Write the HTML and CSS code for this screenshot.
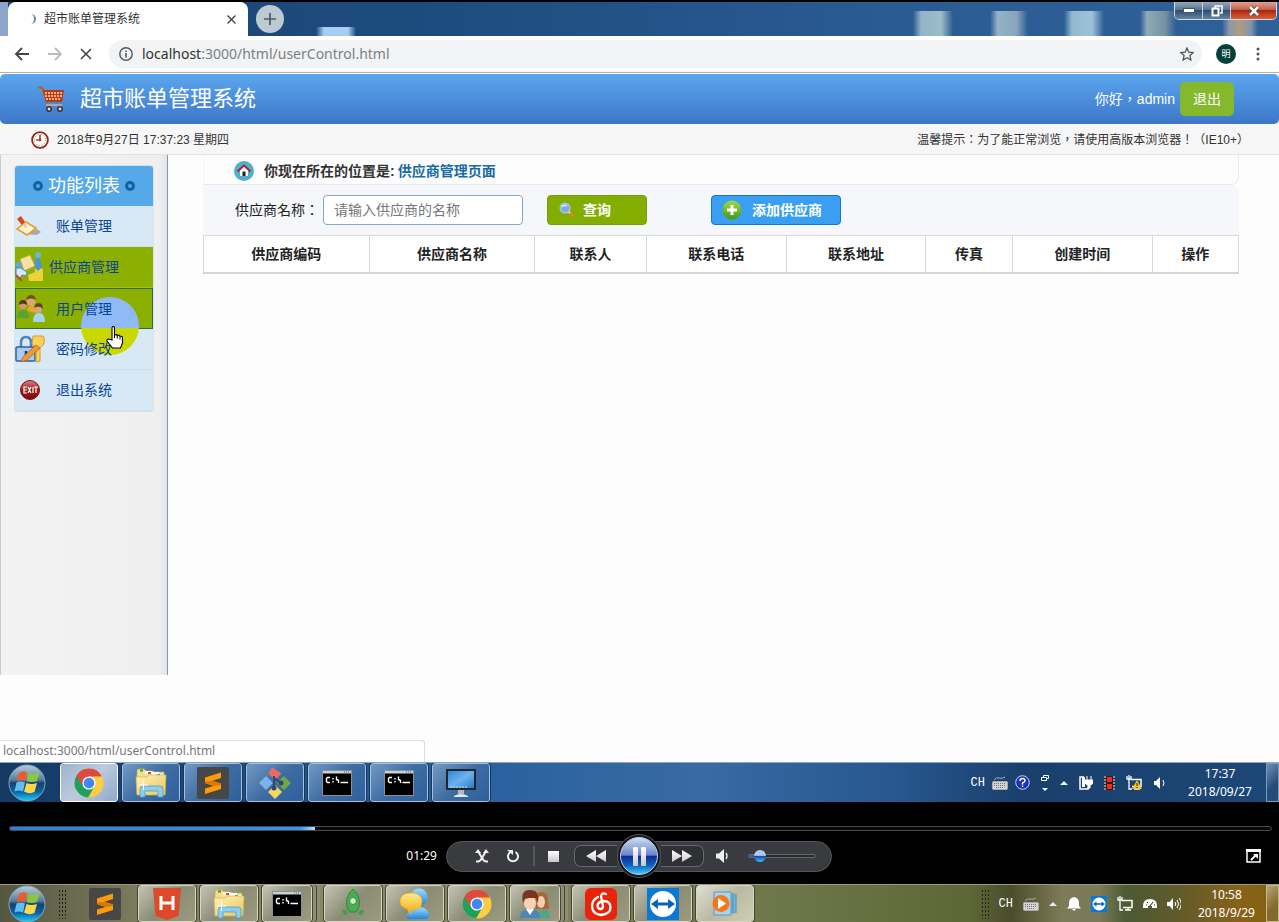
FILE: index.html
```html
<!DOCTYPE html>
<html lang="zh-CN">
<head>
<meta charset="utf-8">
<meta name="viewport" content="width=device-width, initial-scale=1">
<title>超市账单管理系统</title>
<link rel="stylesheet" href="styles.css">
</head>
<body>
<svg class="defs" aria-hidden="true">
  <defs>
    <linearGradient id="gOrb" x2="0" y2="1"><stop offset="0" stop-color="#b9cddb"/><stop offset=".42" stop-color="#587c99"/><stop offset=".5" stop-color="#10446f"/><stop offset=".75" stop-color="#0d63a4"/><stop offset="1" stop-color="#19d2ff"/></linearGradient>
    <linearGradient id="gPause" x2="0" y2="1"><stop offset="0" stop-color="#d2dcf3"/><stop offset=".48" stop-color="#6685c8"/><stop offset=".5" stop-color="#0b2c94"/><stop offset=".75" stop-color="#0f62bd"/><stop offset="1" stop-color="#3ed0ff"/></linearGradient>
    <linearGradient id="gWhite" x2="0" y2="1"><stop offset="0" stop-color="#fff"/><stop offset="1" stop-color="#c8c8c8"/></linearGradient>
    <linearGradient id="gFolder" x2="1" y2="1"><stop offset="0" stop-color="#fff3b8"/><stop offset="1" stop-color="#e9c75c"/></linearGradient>
    <linearGradient id="gRed" x2="0" y2="1"><stop offset="0" stop-color="#d08a8a"/><stop offset=".5" stop-color="#a01818"/><stop offset="1" stop-color="#7a0c0c"/></linearGradient>
    <linearGradient id="gGreen" x2="0" y2="1"><stop offset="0" stop-color="#a3d94a"/><stop offset="1" stop-color="#3f9a12"/></linearGradient>
    <linearGradient id="gScreen" x2="1" y2="1"><stop offset="0" stop-color="#2f86d8"/><stop offset=".5" stop-color="#6bb2ee"/><stop offset="1" stop-color="#2f7ac6"/></linearGradient>
    <linearGradient id="gBlue" x2="0" y2="1"><stop offset="0" stop-color="#9fdcff"/><stop offset="1" stop-color="#1f86de"/></linearGradient>
    <linearGradient id="gYellow" x2="0" y2="1"><stop offset="0" stop-color="#ffe98a"/><stop offset="1" stop-color="#f7a90a"/></linearGradient>
  </defs>
  <symbol id="orb" viewBox="0 0 38 38">
    <circle cx="19" cy="19" r="18" fill="url(#gOrb)" stroke="#86a6bd"/>
    <path d="M11 9q4-3 8-1l-2 9q-4-2-8.500 0z" fill="#ee5a2b"/>
    <path d="M20.500 9q5 2 11-1l-2.500 9q-5 2-10.500 0z" fill="#8cc63e"/>
    <path d="M8.500 18.500q4-2 8.500 0l-2 9q-4-2-8.500 0z" fill="#62bdf2"/>
    <path d="M18.500 19q5 2 10.500 0l-2.500 9q-5 2.500-10.500-.5z" fill="#ffd84a"/>
  </symbol>
  <symbol id="chrome" viewBox="0 0 30 30">
    <circle cx="15" cy="15" r="14.500" fill="#ffcd40"/>
    <path d="M15 15L2.400 7.800A14.500 14.500 0 0 0 14 29.500l6.500-11z" fill="#1fa05c"/>
    <path d="M15 15l-7.500 1-5.100-8.200A14.500 14.500 0 0 1 27.900 8.500H15z" fill="#dd4b3e"/>
    <circle cx="15" cy="15" r="6.600" fill="#fff"/><circle cx="15" cy="15" r="5.300" fill="#4285f4"/>
  </symbol>
  <symbol id="explorer" viewBox="0 0 32 30">
    <path d="M2 7V3q0-2 2-2h5l2 2h7l1 1h10v4h1v18H2z" fill="#f5df8c" stroke="#c9a94c" stroke-width=".7"/>
    <path d="M10 3h7v3h-7zM17 4h7v3h-7zM24 6h5v2h-5z" fill="#fff"/><path d="M5 1.500h3v2H5z" fill="#1aab1a"/><path d="M13 4h3v2h-3z" fill="#e8401c"/><path d="M22 6h3v2h-3z" fill="#2492e6"/>
    <path d="M1 9h11l2-2h17l-1 20H2z" fill="url(#gFolder)" stroke="#d3b150" stroke-width=".7"/>
    <path d="M5 29v-8q0-3 3-3h17q3 0 3 3v8h-5v-6H10v6z" fill="#8fcdec" stroke="#4a9fc8" stroke-width=".8"/>
    <path d="M8.500 12v10M4 17h9" stroke="#fff" stroke-width="1"/>
  </symbol>
  <symbol id="sublime" viewBox="0 0 32 32">
    <rect width="32" height="32" rx="2" fill="#474747"/>
    <path d="M8 10.500l16-5v5.500l-8.500 2.700L24 16.500V22L8 27v-5.500l8.500-2.600L8 16z" fill="#ff9a0b"/><path d="M15.500 13.700L24 16.500V18l-7.500.9L8 16v-1.500z" fill="#d87900"/>
  </symbol>
  <symbol id="git" viewBox="0 0 32 32">
    <path d="M9.500 6.500L13 0l9.500 6.500L16 13z" fill="#ee6a5f"/><path d="M0 16l7-7 7 7-7 7z" fill="#7fb0f0"/><path d="M18 16l7-7 7 7-7 7z" fill="#70a844"/><path d="M9 25l7-7 7 7-7 7z" fill="#f8d65a"/>
    <path d="M15 9v11M15 11l7 5" stroke="#2d4a6c" stroke-width="2"/><circle cx="15" cy="21" r="2.500" fill="#2d4a6c"/><circle cx="22" cy="16" r="2.500" fill="#2d4a6c"/>
  </symbol>
  <symbol id="cmd" viewBox="0 0 30 26">
    <rect x=".5" y=".5" width="29" height="25" fill="#000" stroke="#8a8f96"/><rect x="1" y="1" width="28" height="2.500" fill="#c9d0d8"/><path d="M22 2h6" stroke="#51627a" stroke-dasharray="1 1"/>
    <path d="M8 7.500H5.500L4.500 8.500v3l1 1H8M11 8v1.500M11 11v1.500M14.500 6.500v3l2 1V13M18.500 12.500H26" fill="none" stroke="#fff" stroke-width="1.400"/>
  </symbol>
  <symbol id="monitor" viewBox="0 0 32 30">
    <rect x="1" y="1" width="30" height="21" rx="1" fill="#20262c"/><rect x="3" y="3" width="26" height="17" fill="url(#gScreen)"/><path d="M5 19h18" stroke="#b9dcf5" stroke-dasharray="2 1"/><path d="M13 22h6v4h-6z" fill="#b4b9bd"/><path d="M9 28q7-4 14 0v1H9z" fill="#e4e6e8"/>
  </symbol>
  <symbol id="hbuilder" viewBox="0 0 28 32">
    <path d="M0 0h28l-2.500 28L14 32 2.500 28z" fill="#dc4a2b"/><path d="M8 8v14M20 8v14M8 15h12" stroke="#fff" stroke-width="3"/>
  </symbol>
  <symbol id="rocket" viewBox="0 0 24 32">
    <path d="M12 1q8 7 6 18l-3 5H9l-3-5Q4 8 12 1z" fill="#49ae51" stroke="#2d8a38"/><path d="M4 15q-3 3-2 7M20 15q3 3 2 7" stroke="#8d8d7c" fill="none"/><path d="M1 22h4l2 4-4 1zM23 22h-4l-2 4 4 1z" fill="#3ca345"/><circle cx="12" cy="13" r="3.500" fill="#cdeccb" stroke="#2d8a38"/><path d="M6 30.500h12" stroke="#8a8878"/>
  </symbol>
  <symbol id="msn" viewBox="0 0 32 32">
    <circle cx="20" cy="9" r="8.500" fill="url(#gBlue)"/><path d="M9 31q-3-1-1-5 4-7 12-7t10 7q1 4-3 5z" fill="url(#gBlue)"/><path d="M12 5q11 0 11 8.500T12 22v5l-4-6Q1 19 1 13.500 1 5 12 5z" fill="url(#gYellow)" stroke="#e7a41a" stroke-width=".6"/>
  </symbol>
  <symbol id="people" viewBox="0 0 32 30">
    <path d="M17 20q-2-17 5-17 7 0 7 9l1 8z" fill="#a66a35"/><ellipse cx="22" cy="13" rx="4" ry="6" fill="#f5cfae"/><path d="M17 29q0-8 8-8 6 0 6 8z" fill="#4fa788"/><path d="M1 29q0-9 10-9t10 9z" fill="#4b87bd"/><path d="M7 20h8l-4 6z" fill="#fff"/><ellipse cx="11" cy="14" rx="6" ry="7" fill="#f7d3b4"/><path d="M4 14Q1 1 11 1t8 13l-2-5-7 0-4 1z" fill="#7c3422"/>
  </symbol>
  <symbol id="netease" viewBox="0 0 32 32">
    <rect width="32" height="32" rx="6" fill="#ea2208"/><path d="M21 6q-4-2-5 2l2 10q0 3-2.500 3T12.500 18q0-4 6-5 7 0 7 6.500T16 27Q7 26 7 18q0-6 6-9" fill="none" stroke="#fff" stroke-width="2.300" stroke-linecap="round"/>
  </symbol>
  <symbol id="teamviewer" viewBox="0 0 32 32">
    <rect width="32" height="32" fill="#0b78d8"/><circle cx="16" cy="16" r="13" fill="#fff"/><path d="M4 16l7-5v3.500h10V11l7 5-7 5v-3.500H11V21z" fill="#0b62b8"/>
  </symbol>
  <symbol id="wmp" viewBox="0 0 30 26">
    <path d="M9 3h17v19H9z" fill="#79b4d4"/><path d="M4 1h17v23H4z" fill="#a8d3ea" stroke="#5c97b8"/><path d="M23 2v21M26 3v19" stroke="#4a91b8"/><circle cx="11" cy="12.500" r="8.500" fill="#f37a1c"/><path d="M8 7l8 5.500L8 18z" fill="#fff"/>
  </symbol>
  <symbol id="keyboard" viewBox="0 0 16 14">
    <path d="M2 4q2-3 5-2t6-1" fill="none" stroke="#aaa"/><rect x=".5" y="5.500" width="15" height="8" rx="1" fill="#d4d4d4" stroke="#aaa"/><path d="M2 7.500h12M2 9.500h12M4 11.500h8" stroke="#777" stroke-dasharray="1 1"/>
  </symbol>
  <symbol id="uparrow" viewBox="0 0 8 4"><path d="M4 0l4 4H0z" fill="#e6ecf4"/></symbol>
  <symbol id="network" viewBox="0 0 16 15">
    <path d="M5 4.500h10v7H6M8 14h6M11 12v2" fill="none" stroke="#fff" stroke-width="1.500"/><path d="M1 1v3h4V1M3 0v14h3" fill="none" stroke="#fff" stroke-width="1.300"/>
  </symbol>
  <symbol id="speaker" viewBox="0 0 14 14">
    <path d="M0 5h2.500L6 1v12L2.500 9H0z" fill="#fff"/><path d="M8 5q1.500 2 0 4M10 3q3 4 0 8M12 1q4.500 6 0 12" fill="none" stroke="#fff"/>
  </symbol>
</svg>

<div class="browser">
  <div class="tabstrip">
    <div class="tab"><span class="spinner"></span><span class="tab-title">超市账单管理系统</span>
      <button class="bare" aria-label="关闭标签页"><svg width="9" height="9" viewBox="0 0 9 9"><path d="M.5.5l8 8M8.500.5l-8 8" stroke="#444" stroke-width="1.400"/></svg></button>
    </div>
    <button class="newtab" aria-label="新标签页"><svg width="14" height="14" viewBox="0 0 14 14"><path d="M7 1v12M1 7h12" stroke="#4c5a66" stroke-width="1.700"/></svg></button>
    <div class="wincontrols">
      <button aria-label="最小化"><svg width="12" height="5" viewBox="0 0 12 5"><rect x=".5" y=".5" width="11" height="4" fill="#fff" stroke="#456"/></svg></button>
      <button aria-label="还原"><svg width="12" height="12" viewBox="0 0 12 12"><path d="M4 3V1h7v7H9" fill="none" stroke="#fff" stroke-width="1.500"/><rect x="1.500" y="3.500" width="6" height="7" fill="none" stroke="#fff" stroke-width="2"/></svg></button>
      <button class="winclose" aria-label="关闭"><svg width="12" height="10" viewBox="0 0 12 10"><path d="M2 1l8 8M10 1L2 9" stroke="#533" stroke-width="4"/><path d="M2 1l8 8M10 1L2 9" stroke="#fff" stroke-width="2.500"/></svg></button>
    </div>
  </div>
  <div class="toolbar">
    <button class="bare" aria-label="后退"><svg width="16" height="14" viewBox="0 0 16 14"><path d="M15 7H2M8 1L2 7l6 6" fill="none" stroke="#444" stroke-width="1.800"/></svg></button>
    <button class="bare" aria-label="前进"><svg width="16" height="14" viewBox="0 0 16 14"><path d="M1 7h13M8 1l6 6-6 6" fill="none" stroke="#bbb" stroke-width="1.800"/></svg></button>
    <button class="bare" aria-label="停止"><svg width="12" height="12" viewBox="0 0 12 12"><path d="M1 1l10 10M11 1L1 11" stroke="#444" stroke-width="1.600"/></svg></button>
    <div class="address">
      <svg width="14" height="14" viewBox="0 0 14 14"><circle cx="7" cy="7" r="6.200" fill="none" stroke="#555" stroke-width="1.400"/><path d="M7 6v4.500M7 3.500v1.500" stroke="#555" stroke-width="1.600"/></svg>
      <span class="url"><b>localhost</b>:3000/html/userControl.html</span>
      <svg width="14" height="14" viewBox="0 0 14 14"><path d="M7 1l1.800 4.200 4.500.4-3.400 3 1 4.400L7 10.700 3.100 13l1-4.400-3.400-3 4.500-.4z" fill="none" stroke="#555" stroke-width="1.300"/></svg>
    </div>
    <span class="avatar">明</span>
    <svg class="dots" width="4" height="14" viewBox="0 0 4 14"><g fill="#555"><circle cx="2" cy="2" r="1.500"/><circle cx="2" cy="7" r="1.500"/><circle cx="2" cy="12" r="1.500"/></g></svg>
  </div>
</div>

<div class="page">
  <header class="site-header">
    <svg width="26" height="26" viewBox="0 0 26 26"><path d="M0 1.500h4l5 15" fill="none" stroke="#c9561f" stroke-width="2"/><path d="M5 4h21l-2 12H8z" fill="#b93a10"/><path d="M7 7h17M7 10h17M8 13h15" stroke="#f8d9b5" stroke-dasharray="2 1" stroke-width="1.600"/><path d="M8 19h16" stroke="#a9a9a9" stroke-width="2"/><circle cx="11" cy="23" r="2.200" fill="#ddd" stroke="#3a3030" stroke-width="1.500"/><circle cx="22" cy="23" r="2.200" fill="#ddd" stroke="#3a3030" stroke-width="1.500"/></svg>
    <h1>超市账单管理系统</h1>
    <p class="hello" lang="zh-Hant">你好，admin</p>
    <a class="logout" href="#">退出</a>
  </header>
  <div class="datebar">
    <svg width="18" height="18" viewBox="0 0 18 18"><circle cx="9" cy="9" r="7.900" fill="#fffaf5" stroke="#8e2a14" stroke-width="1.800"/><circle cx="9" cy="9" r="5.600" fill="none" stroke="#777" stroke-dasharray="1 1.930"/><path d="M9 4v5H5" fill="none" stroke="#222" stroke-width="1.200"/><circle cx="9" cy="9" r="1.300" fill="#d22"/></svg>
    <span>2018年9月27日 17:37:23 星期四</span>
    <span class="tip" lang="zh-Hant">温馨提示：为了能正常浏览，请使用高版本浏览器！（IE10+）</span>
  </div>
  <div class="columns">
    <aside class="sidebar">
      <nav class="menu">
        <h2><i></i>功能列表<i></i></h2>
        <ul>
          <li><a href="#"><svg width="26" height="20" viewBox="0 0 26 20"><path d="M9 18l13 1 4-3-4-3z" fill="#aaa"/><path d="M2 13l9-7 10 6-9 7z" fill="#fff3d6" stroke="#e39b20" stroke-width="1.500"/><path d="M6 7l5 6 1-4-4-5z" fill="#f5c79c"/><path d="M2 3l4-3 4 6-3 3z" fill="#d8481a"/></svg><span>账单管理</span></a></li>
          <li class="on"><a href="#"><svg width="28" height="30" viewBox="0 0 28 30"><path d="M13 23l7-3v-6l8 3v12H14z" fill="#ebd13d"/><path d="M5 7l10-4 5 11-11 5z" fill="#f5e3a0" stroke="#c5a84d"/><circle cx="23" cy="3" r="3" fill="#6cb3e5"/><path d="M20 6l5 1 2 8-4 4-3-3z" fill="#4b96d2"/><circle cx="4" cy="13" r="3" fill="#5ea9dd"/><path d="M1 16h5l6 4-1 4-4-1-3 5-3-4z" fill="#d6e6f5" stroke="#4a88b8"/><path d="M1 23l6 6" stroke="#c04b21" stroke-width="2"/></svg><span>供应商管理</span></a></li>
          <li class="on hover"><a href="#"><svg width="29" height="28" viewBox="0 0 29 28"><path d="M11 16q1-6 5-6t5 8z" fill="#e8a827"/><circle cx="15" cy="6" r="4.500" fill="#d6aa76"/><path d="M10 5q1-5 5-5t5 5q-5-3-10 0z" fill="#7a4b28"/><path d="M1 23q0-8 6-8t6 8z" fill="#57a23a"/><circle cx="7" cy="10" r="4" fill="#cf9c68"/><path d="M3 10q0-5 4-5t4 5q-4-3-8 0z" fill="#543018"/><path d="M17 27q0-9 6-9t6 9z" fill="#a8d1f3"/><circle cx="22" cy="14" r="4" fill="#d6a77a"/><path d="M18 13q1-5 5-5t4 6q-4-4-9-1z" fill="#66432a"/></svg><span>用户管理</span></a></li>
          <li><a href="#"><svg width="30" height="28" viewBox="0 0 30 28"><path d="M6 12V8q0-6 5-6t5 6v4" fill="none" stroke="#4a82c4" stroke-width="2.500"/><rect x="1" y="12" width="19" height="14" rx="1" fill="#a9ccf1" stroke="#2b62a8" stroke-width="1.500"/><path d="M11 16v7" stroke="#16386a" stroke-width="2.500"/><path d="M18 1h10q2 2 1 8l-4 4v13l-4 1V13l-4-4z" fill="#f8d25a" stroke="#d69a20"/><path d="M6 27l2-5L21 10l4 3-13 12z" fill="#f09a35" stroke="#b4662b" stroke-width=".8"/></svg><span>密码修改</span></a></li>
          <li><a href="#"><svg width="30" height="20" viewBox="0 0 30 20"><circle cx="15" cy="10" r="9.500" fill="url(#gRed)" stroke="#7c1414"/><path d="M12 7H9v6h3M9 10h3M13 7l3 6M16 7l-3 6M18 7v6M19 7h4M21 7v6" fill="none" stroke="#fff" stroke-width="1.200"/></svg><span>退出系统</span></a></li>
        </ul>
        <div class="halo"></div>
        <svg class="cursor" width="18" height="23" viewBox="0 0 18 23"><path d="M6 14V2q0-1.500 1.200-1.500T8.500 2v7q2-1 2.800.5 2-1 2.700.8 2.500-.5 2.500 1.700V17l-2 5H6.500L1 15q-.5-2 1.500-2z" fill="#fff" stroke="#000" stroke-width="1.100"/><path d="M8.500 8v4M11.300 9.500v3M14 10.500v3" stroke="#000"/></svg>
      </nav>
    </aside>
    <main class="content">
      <div class="location">
        <svg width="20" height="20" viewBox="0 0 20 20"><circle cx="10" cy="10" r="10" fill="#4fb0cc"/><path d="M6 9l4-4 4 4v6H6z" fill="#fff"/><path d="M3.500 10.500L10 4.500l6.500 6" fill="none" stroke="#b0202c" stroke-width="1.800"/><path d="M8.500 15v-4.500h3V15z" fill="#223"/></svg>
        <strong>你现在所在的位置是:</strong><span class="here">供应商管理页面</span>
      </div>
      <form class="search">
        <label for="supplier" lang="zh-Hant">供应商名称：</label>
        <input id="supplier" type="text" placeholder="请输入供应商的名称">
        <button class="query" type="button"><svg width="16" height="16" viewBox="0 0 16 16"><path d="M9.500 9.500l5 5" stroke="#e5822a" stroke-width="2.500"/><path d="M9 9l2 2" stroke="#ddd" stroke-width="2"/><circle cx="6" cy="6" r="4.800" fill="#78aee0" stroke="#a9c4dd" stroke-width="1.500"/><path d="M3 5q2-3 5-1" stroke="#e3f1ff" stroke-width="1.500" fill="none"/></svg>查询</button>
        <a class="add" href="#"><svg width="20" height="20" viewBox="0 0 20 20"><circle cx="10" cy="10" r="9.500" fill="url(#gGreen)"/><path d="M10 5v10M5 10h10" stroke="#fff" stroke-width="3"/></svg>添加供应商</a>
      </form>
      <table class="suppliers">
        <thead><tr><th class="w-code">供应商编码</th><th class="w-code">供应商名称</th><th class="w-person">联系人</th><th class="w-contact">联系电话</th><th class="w-contact">联系地址</th><th class="w-fax">传真</th><th class="w-contact">创建时间</th><th class="w-fax">操作</th></tr></thead>
      </table>
    </main>
  </div>
  <div class="statusbubble">localhost:3000/html/userControl.html</div>
</div>

<div class="taskbar inner">
  <button class="start" aria-label="开始"><svg width="38" height="38"><use href="#orb"/></svg></button>
  <div class="tasks">
    <button class="task lit" aria-label="Chrome"><svg width="30" height="30"><use href="#chrome"/></svg></button>
    <button class="task" aria-label="资源管理器"><svg width="32" height="30"><use href="#explorer"/></svg></button>
    <button class="task" aria-label="Sublime Text"><svg width="32" height="32"><use href="#sublime"/></svg></button>
    <button class="task" aria-label="Git"><svg width="32" height="32"><use href="#git"/></svg></button>
    <button class="task" aria-label="命令提示符"><svg width="30" height="26"><use href="#cmd"/></svg></button>
    <button class="task" aria-label="命令提示符 2"><svg width="30" height="26"><use href="#cmd"/></svg></button>
    <button class="task" aria-label="显示器"><svg width="32" height="30"><use href="#monitor"/></svg></button>
  </div>
  <div class="tray">
    <span class="ime">CH</span>
    <svg width="16" height="14"><use href="#keyboard"/></svg>
    <svg width="15" height="15" viewBox="0 0 15 15"><circle cx="7.500" cy="7.500" r="6.800" fill="#1b35b8" stroke="#c5d1ee"/><path d="M5 6q0-2.500 2.500-2.500T10 5.500Q10 7 7.500 8v1.500M7.500 10.500V12" fill="none" stroke="#fff" stroke-width="1.500"/></svg>
    <svg width="8" height="18" viewBox="0 0 8 18"><path d="M2.500 3.500v-2h5v3h-2M.5 3.500h5v3h-5z" fill="none" stroke="#fff"/><path d="M1 14h6l-3 3z" fill="#fff"/></svg>
    <svg width="8" height="4"><use href="#uparrow"/></svg>
    <svg width="14" height="15" viewBox="0 0 14 15"><path d="M5 2H1v12h8v-2" fill="none" stroke="#fff" stroke-width="1.500"/><path d="M3 2h3v10H3z" fill="#fff"/><path d="M8 1v4M12 1v4M6 5h8v3q-1 2-3 2v3H9v-3Q7 10 6 8z" stroke="#fff" fill="#fff"/></svg>
    <svg width="11" height="14" viewBox="0 0 11 14"><rect width="11" height="14" fill="#222"/><path d="M1 0v14M10 0v14" stroke="#fff" stroke-dasharray="2 1"/><path d="M3 1h5v5H3zM3 8h5v5H3z" fill="#f22"/></svg>
    <svg width="16" height="15" viewBox="0 0 16 15"><use href="#network"/><path d="M11 5l5 9H6z" fill="#f6c719"/><path d="M11 8v3M11 12v1" stroke="#222"/></svg>
    <svg width="14" height="14" viewBox="0 0 14 14"><path d="M1 5h2l4-4v12L3 9H1z" fill="#fff"/><path d="M10 4q2 3 0 6" fill="none" stroke="#fff"/></svg>
    <div class="clock"><span>17:37</span><span>2018/09/27</span></div>
  </div>
  <button class="peek" aria-label="显示桌面"></button>
</div>

<div class="player">
  <input class="seek" type="range" min="0" max="1000" value="242" aria-label="播放进度">
  <div class="player-row">
    <span class="elapsed">01:29</span>
    <div class="pill">
      <button class="bare" aria-label="随机播放"><svg width="14" height="14" viewBox="0 0 14 14"><path d="M1 12.500h2q2 0 4-3.500t3.500-6M13 12.500h-2q-2 0-4-3.500T3.500 3" fill="none" stroke="#eee" stroke-width="2"/><path d="M0 4l3-4 3 4zM8 4l3-4 3 4z" fill="#eee"/></svg></button>
      <button class="bare" aria-label="重复"><svg width="14" height="14" viewBox="0 0 14 14"><path d="M9.500 3a5 5 0 1 1-5 0" fill="none" stroke="#eee" stroke-width="2"/><path d="M1 1h6v5z" fill="#eee"/></svg></button>
      <span class="divider"></span>
      <button class="bare stop" aria-label="停止播放"><svg width="11" height="11" viewBox="0 0 11 11"><rect width="11" height="11" fill="url(#gWhite)"/></svg></button>
      <div class="transport">
        <button class="skip back" aria-label="上一个"><svg width="20" height="12" viewBox="0 0 20 12"><path d="M10 0v12L0 6zM20 0v12L10 6z" fill="url(#gWhite)"/></svg></button>
        <button class="pause" aria-label="暂停"><svg width="44" height="44" viewBox="0 0 44 44"><circle cx="22" cy="22" r="21.500" fill="#15171c" stroke="#555"/><circle cx="22" cy="22" r="18.500" fill="url(#gPause)" stroke="#b9d0ef"/><rect x="16" y="13" width="5" height="19" rx="1" fill="url(#gWhite)"/><rect x="24" y="13" width="5" height="19" rx="1" fill="url(#gWhite)"/></svg></button>
        <button class="skip fwd" aria-label="下一个"><svg width="20" height="12" viewBox="0 0 20 12"><path d="M0 0v12l10-6zM10 0v12l10-6z" fill="url(#gWhite)"/></svg></button>
      </div>
      <button class="bare mute" aria-label="静音"><svg width="12" height="14" viewBox="0 0 12 14"><path d="M0 4.500h3L8 0v14L3 9.500H0z" fill="#eee"/><path d="M10 4q2 3 0 6" fill="none" stroke="#eee" stroke-width="1.400"/></svg></button>
      <input class="volume" type="range" min="0" max="100" value="10" aria-label="音量">
    </div>
    <button class="bare full" aria-label="全屏"><svg width="15" height="14" viewBox="0 0 15 14"><path d="M1 2v11h13V2z" fill="#000" stroke="#fff" stroke-width="1.500"/><path d="M0 1.500h15" stroke="#fff" stroke-width="3"/><path d="M5 11l5-5" stroke="#fff" stroke-width="2"/><path d="M7 5h5v5z" fill="#fff"/></svg></button>
  </div>
</div>

<div class="taskbar outer">
  <button class="start" aria-label="开始菜单"><svg width="38" height="38"><use href="#orb"/></svg></button>
  <span class="grip"></span>
  <button class="bare pinned" aria-label="Sublime"><svg width="32" height="32"><use href="#sublime"/></svg></button>
  <div class="tasks">
    <button class="task" aria-label="HBuilder"><svg width="28" height="32"><use href="#hbuilder"/></svg></button>
    <button class="task" aria-label="文件夹"><svg width="32" height="30"><use href="#explorer"/></svg></button>
    <button class="task stacked" aria-label="终端"><svg width="30" height="26"><use href="#cmd"/></svg></button>
    <button class="task" aria-label="火箭"><svg width="24" height="32"><use href="#rocket"/></svg></button>
    <button class="task" aria-label="消息"><svg width="32" height="32"><use href="#msn"/></svg></button>
    <button class="task" aria-label="浏览器"><svg width="30" height="30"><use href="#chrome"/></svg></button>
    <button class="task stacked" aria-label="联系人"><svg width="32" height="30"><use href="#people"/></svg></button>
    <button class="task" aria-label="网易云音乐"><svg width="32" height="32"><use href="#netease"/></svg></button>
    <button class="task" aria-label="TeamViewer"><svg width="32" height="32"><use href="#teamviewer"/></svg></button>
    <button class="task lit" aria-label="媒体播放器"><svg width="30" height="26"><use href="#wmp"/></svg></button>
  </div>
  <div class="tray">
    <span class="grip"></span>
    <span class="ime">CH</span>
    <svg width="16" height="14"><use href="#keyboard"/></svg>
    <svg width="8" height="4"><use href="#uparrow"/></svg>
    <svg width="14" height="14" viewBox="0 0 14 14"><path d="M7 0q5 1 5 6v3l2 2.500H0L2 9V6q0-5 5-6zM5 12h4l-2 2z" fill="#fff"/></svg>
    <svg width="16" height="16"><use href="#teamviewer"/></svg>
    <svg width="16" height="15"><use href="#network"/></svg>
    <svg width="14" height="9" viewBox="0 0 14 9"><path d="M0 9V7q0-7 7-7t7 7v2H9V7H5v2z" fill="#fff"/><path d="M3 6h1M4 3l1 1M10 3L7 7M11 6h1" stroke="#222"/></svg>
    <svg width="14" height="14"><use href="#speaker"/></svg>
    <div class="clock"><span>10:58</span><span>2018/9/29</span></div>
  </div>
  <button class="peek" aria-label="桌面"></button>
</div>
</body>
</html>
```
FILE: styles.css
```css
* { box-sizing: border-box; }
body {
  margin: 0; min-height: 100vh; display: flex; flex-direction: column;
  background: #fdfdfd; color: #333; overflow-x: hidden;
  font: 14px/20px "Liberation Sans", "Noto Sans CJK SC", sans-serif;
}
h1, h2, p, ul { margin: 0; padding: 0; }
h1, h2 { font-weight: 400; }
ul { list-style: none; }
a { color: inherit; text-decoration: none; }
svg { display: block; flex: none; }
button { font: inherit; padding: 0; margin: 0; }
.defs { position: absolute; width: 0; height: 0; }
.bare { background: none; border: 0; display: flex; }

/* browser chrome */
.browser { border-top: 2px solid #000; border-bottom: 1px solid #bfae9f; }
.tabstrip {
  height: 34px; display: flex; align-items: center; padding-left: 8px;
  background:
    linear-gradient(#8ba5cb, #8ba5cb) 0 0 / 8px 100% no-repeat,
    linear-gradient(90deg, transparent, #a9cdf0 20%, #a9cdf0 80%, transparent) 316px 25px / 40px 9px no-repeat,
    linear-gradient(90deg, transparent, #93b3c8 20%, #9dbdcb 70%, transparent) 913px 9px / 40px 25px no-repeat,
    linear-gradient(90deg, transparent, #93b3c8 20%, #8aa4bb 70%, transparent) 990px 9px / 38px 25px no-repeat,
    linear-gradient(90deg, transparent, #93b9d0 20%, #9dc1d8 70%, transparent) 1064px 9px / 40px 25px no-repeat,
    linear-gradient(90deg, transparent, #8fabb8 20%, #7591a4 70%, transparent) 1140px 9px / 36px 25px no-repeat,
    linear-gradient(90deg, transparent, #8a98a8 20%, #b09a80 50%, #8295ae 80%, transparent) 1222px 18px / 36px 16px no-repeat,
    linear-gradient(90deg, #1c4672, #1d4a7d 30%, #2a5b93 70%, #2f6097);
}
.tab {
  align-self: stretch; width: 240px; display: flex; align-items: center;
  background: #fff; border-radius: 8px 8px 0 0; padding: 0 12px 0 22px;
  font-size: 12px; color: #333;
}
.tab-title { flex: 1; margin-left: 8px; }
.spinner { width: 6px; height: 10px; border-right: 2px solid #6a85bd; border-radius: 0 6px 6px 0; }
.newtab {
  width: 28px; height: 28px; margin-left: 8px; border: 0; border-radius: 50%;
  background: #bccbd3; display: grid; place-items: center;
}
.wincontrols {
  margin-left: auto; margin-right: 2px; align-self: flex-start; display: flex;
  border: 1px solid #cfdae6; border-top: 0; border-radius: 0 0 5px 5px; overflow: hidden;
}
.wincontrols button {
  width: 28px; height: 17px; border: 0; border-right: 1px solid #c4d0dd;
  background: linear-gradient(#93a7bd, #52708f 50%, #2f4f70 50%, #6583a2);
  display: grid; place-items: center;
}
.wincontrols .winclose { width: 45px; border: 0; background: linear-gradient(#dca294, #c25a43 50%, #a82810 50%, #d9613a); }
.toolbar { height: 36px; display: flex; align-items: center; gap: 17px; padding: 0 19px 0 14px; background: #fff; }
.address {
  flex: 1; height: 28px; border-radius: 14px; background: #f1f3f4; display: flex;
  align-items: center; gap: 9px; padding: 0 8px 0 10px;
}
.url { flex: 1; font: 14px/20px "Noto Sans", sans-serif; color: #7d7f82; }
.url b { font-weight: 400; color: #333; }
.avatar { width: 20px; height: 20px; border-radius: 50%; background: #064039; color: #fff; font-size: 9px; text-align: center; }
.dots { margin-left: 3px; }
.address + .avatar { margin-left: -3px; }

/* page */
.page { flex: 1; position: relative; padding-top: 1px; }
.site-header {
  height: 50px; display: flex; align-items: center; padding: 0 45px 0 38px; border-radius: 5px;
  background: linear-gradient(#5ba6ee, #3d77c8); color: #fff;
}
.site-header h1 { flex: 1; margin-left: 16px; font-size: 22px; line-height: 30px; }
.hello, .tip, .search label { font-family: "Liberation Sans", "Noto Sans CJK TC", sans-serif; }
.logout { margin-left: 5px; padding: 7px 13px; border-radius: 5px; background: #85b82c; }
.datebar {
  height: 31px; display: flex; align-items: center; gap: 8px; padding: 1px 30px 0 31px;
  background: #f6f6f6; border-bottom: 1px solid #e4e4e4; font-size: 12px;
}
.tip { margin-left: auto; }
.columns { display: flex; align-items: flex-start; }
.sidebar {
  width: 168px; min-height: 520px; padding: 10px 13px; flex: none;
  background: linear-gradient(90deg, #f3f3f3, #efefef 95%, #e2e4ea);
  border: 1px solid #c9ccd8; border-width: 0 1px; border-right-color: #8596b4;
}
.menu { position: relative; border-radius: 3px; border: 1px solid #d4e3ee; }
.menu h2 {
  display: flex; align-items: center; justify-content: center; gap: 5px; height: 40px;
  background: #55a9e8; color: #fff; font-size: 18px; border-radius: 3px 3px 0 0;
}
.menu i { width: 10px; height: 10px; border: 3px solid #12629c; border-radius: 50%; }
.menu li { height: 41px; background: #d8e9f5; border-bottom: 1px solid #cddfea; }
.menu li.on { background: #8bb000; border-color: #a3c11c; }
.menu li.hover { border: 1px solid #2c6a52; }
.menu a { height: 100%; display: grid; grid-template-columns: 28px 1fr 28px; align-items: center; color: #0b4595; text-align: center; }
.menu a span { position: relative; z-index: 1; }
.halo {
  position: absolute; left: 66px; top: 131px; width: 58px; height: 58px; border-radius: 50%;
  background: linear-gradient(#8fbaf7 31px, #c8d800 31px);
}
.cursor { position: absolute; left: 91px; top: 160px; z-index: 2; }
.content { flex: 1; min-width: 0; padding: 0 40px 0 35px; }
.location {
  height: 30px; display: flex; align-items: center; padding: 2px 0 0 30px; gap: 10px;
  border: 1px solid #e9eaec; border-top: 0; border-left-color: #f4f4f4; border-radius: 0 0 8px 0; background: #fcfcfc;
}
.location .here { margin-left: -7px; font-weight: 700; color: #1a6ba3; }
.search { height: 50px; display: flex; align-items: center; padding-left: 32px; background: #f5f7fa; border-radius: 0 8px 0 0; }
.search label { color: #222; }
.search input {
  width: 200px; height: 30px; margin: 0 24px 0 4px; padding: 0 10px; font: inherit;
  border: 1px solid #86a6cb; border-radius: 4px; background: #fff;
}
.search input::placeholder { color: #777; opacity: 1; }
.query, .add { height: 30px; display: flex; align-items: center; border-radius: 4px; color: #fff; font-weight: 700; }
.query { width: 100px; gap: 8px; padding-left: 11px; border: 1px solid #73a010; background: #83ad00; }
.add { margin-left: 64px; width: 130px; gap: 10px; padding-left: 10px; border: 1px solid #1877c4; background: #3a9ff2; }
.suppliers { width: 100%; border-collapse: collapse; table-layout: fixed; background: #fff; }
.suppliers th { height: 37px; padding: 0; border: 1px solid #d8d8d8; border-bottom: 2px solid #d5d5d5; color: #222; }
.w-code { width: 16%; }
.w-person { width: 10.8%; }
.w-contact { width: 13.5%; }
.w-fax { width: 8.35%; }
.statusbubble {
  position: absolute; left: 0; bottom: 0; width: 425px; height: 22px; padding-left: 3px;
  border: 1px solid #ddd; border-width: 1px 1px 0 0; border-radius: 0 3px 0 0; background: #fff;
  font: 12px/20px "Noto Sans", sans-serif; color: #777;
}

/* taskbars */
.taskbar { height: 40px; display: flex; align-items: center; flex: none; border-top: 1px solid #8da6bd; overflow: hidden; }
.inner { background: linear-gradient(90deg, #143963, #2a629f 38%, #386aa3 55%, #28578f 70%, #1a3f6c 80%, #1c4877); }
.outer { height: 38px; border-top-color: #9b9c7e; background: linear-gradient(90deg, #565741, #7e8060 12%, #8a8b68 30%, #6c7648 62%, #5d6636 76%, #4a4d2a 79%, #7d7a58 83%, #7a7a58 86%, #4b5a35 88%, #5f5a2a 92%, #89621a 97%, #80600f); }
.start { background: none; border: 0; margin-left: 8px; }
.tasks { display: flex; gap: 4px; height: 100%; margin-left: 14px; }
.task {
  width: 58px; height: 100%; display: grid; place-items: center; border-radius: 3px;
  border: 1px solid #a5c3e0; background: linear-gradient(135deg, #7399c2, #3e6da4 50%, #2f609b);
  outline: 1px solid #17375c;
}
.inner .lit { background: linear-gradient(135deg, #9fb3cf, #bccadd 50%, #8fa8ca); border-color: #fff; }
.outer .task { border-color: #d6d6c6; outline-color: #45462f; background: linear-gradient(135deg, #c3c3b4, #8b8c75 50%, #9c9b80); }
.outer .lit { background: linear-gradient(135deg, #deded4, #b9b9a2 50%, #cfceb5); }
.outer .stacked { width: 50px; margin-right: 8px; box-shadow: 4px 0 #8f8f76, 5px 0 #45462f, 8px 0 #8f8f76; }
.outer .tasks { margin-left: 17px; }
.pinned { margin-left: 23px; }
.grip { width: 8px; height: 30px; background: radial-gradient(#222 1px, transparent 1px) 0 0 / 3px 4px; }
.outer .start + .grip { margin-left: 12px; }
.tray { margin-left: auto; display: flex; align-items: center; gap: 11px; color: #fff; }
.tray .ime { font: 12px/16px "Liberation Mono", monospace; }
.inner .ime + svg { margin-left: -4px; }
.inner .tray svg:nth-of-type(2) { margin-left: -4px; }
.clock { width: 90px; margin-left: -3px; display: flex; flex-direction: column; text-align: center; font: 12px/18px "Noto Sans", sans-serif; }
.outer .clock { width: 77px; }
.outer .tray { gap: 10px; }
.peek { width: 13px; height: 100%; margin-left: 1px; border: 1px solid #7f9ab8; background: linear-gradient(135deg, #6d8fb5, #244b7a 60%); }
.outer .peek { border-color: #c9b98a; background: linear-gradient(135deg, #b5a678, #84692c 60%); }

/* media player */
.player { height: 82px; flex: none; background: #000; color: #fff; padding: 24px 7px 0 9px; }
.player input { appearance: none; display: block; margin: 0; }
.seek {
  width: 100%; height: 5px; border: 1px solid #4a4a4e; border-radius: 3px;
  background: linear-gradient(90deg, #2c7fe0, #3a90ea 95%, #a9e8ff) 0 0 / 24.2% 100% no-repeat #08080a;
}
.seek::-webkit-slider-thumb { appearance: none; width: 1px; height: 1px; }
.player-row { display: grid; grid-template-columns: 1fr auto 1fr; align-items: center; height: 50px; margin-right: 3px; }
.elapsed { text-align: right; margin-right: 9px; font: 12px/20px "Noto Sans", sans-serif; }
.pill {
  width: 386px; height: 31px; border: 1px solid #56575c; border-radius: 16px; background: #3a3b3e;
  display: flex; align-items: center; padding: 0 15px 0 28px;
}
.pill .bare + .bare { margin-left: 17px; }
.divider { width: 2px; height: 20px; background: #55565e; margin-left: 13px; }
.pill .stop { margin-left: 13px; }
.transport { display: flex; align-items: center; margin-left: 15px; }
.skip { width: 43px; height: 22px; border: 1px solid #67686c; background: #303134; display: grid; place-items: center; }
.back { border-radius: 7px 0 0 7px; border-right: 0; }
.fwd { border-radius: 0 7px 7px 0; border-left: 0; }
.pause { border: 0; background: none; border-radius: 50%; }
.mute { margin-left: 12px; }
.player .volume { margin-left: auto; width: 68px; height: 4px; border-radius: 2px; border: 1px solid #66676c; background: linear-gradient(90deg, #2563a8 12%, #2b2c30 12%); }
.volume::-webkit-slider-thumb { appearance: none; width: 12px; height: 12px; border-radius: 50%; background: linear-gradient(#b5c9ef 45%, #1546a5 50%, #3ac2ff); }
.full { justify-self: end; margin-right: 8px; }
```
